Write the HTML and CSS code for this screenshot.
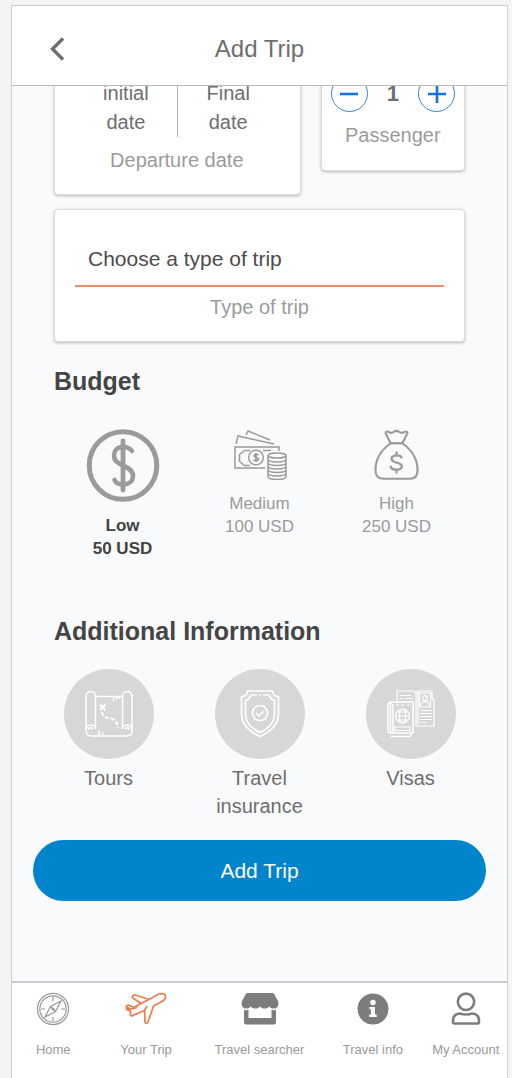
FILE: index.html
```html
<!DOCTYPE html>
<html lang="en">
<head>
<meta charset="utf-8">
<meta name="viewport" content="width=device-width, initial-scale=1">
<title>Add Trip</title>
<link rel="stylesheet" href="styles.css">
</head>
<body>
<div class="phone">
  <header class="topbar">
    <button class="back" type="button" aria-label="Back">
      <svg width="15" height="24" viewBox="0 0 15 24"><path d="M13 1.500 2.500 12l10.500 10.500" fill="none" stroke="currentColor" stroke-width="3.400"/></svg>
    </button>
    <h1 class="title">Add Trip</h1>
  </header>

  <main class="content">
    <section class="trip-row">
      <div class="card dates-card">
        <div class="dates">
          <button class="date" type="button">initial<br>date</button>
          <button class="date" type="button">Final<br>date</button>
        </div>
        <p class="caption">Departure date</p>
      </div>
      <div class="card passenger-card">
        <div class="stepper">
          <button class="step" type="button" aria-label="Remove passenger">
            <svg width="20" height="20" viewBox="0 0 20 20"><path d="M1 10h18" stroke="currentColor" stroke-width="2.600"/></svg>
          </button>
          <span class="count">1</span>
          <button class="step" type="button" aria-label="Add passenger">
            <svg width="20" height="20" viewBox="0 0 20 20"><path d="M1 10h18M10 1v18" stroke="currentColor" stroke-width="2.600"/></svg>
          </button>
        </div>
        <p class="caption">Passenger</p>
      </div>
    </section>

    <section class="card type-card">
      <select class="type-select" id="trip-type"><option>Choose a type of trip</option></select>
      <label class="caption" for="trip-type">Type of trip</label>
    </section>

    <h2 class="heading">Budget</h2>
    <div class="budget">
      <button class="tier selected" type="button">
        <svg width="74" height="73" viewBox="0 0 74 73" fill="none" stroke="currentColor" stroke-linecap="round">
          <circle cx="37" cy="36.500" r="33.800" stroke-width="5"/>
          <path d="M37 12v49" stroke-width="4.800"/>
          <path d="M46 22c-2.500-3.500-6-4-9-4-6 0-9 4-9 8.500 0 6 5 8 9 10s10 4.500 10 10.500c0 5-4 8.500-10 8.500-4 0-7-1.500-8.500-4.500" stroke-width="4.600"/>
        </svg>
        <span>Low<br>50 USD</span>
      </button>
      <button class="tier" type="button">
        <svg width="54" height="51" viewBox="0 0 54 51" fill="none" stroke="currentColor" stroke-width="1.500">
          <path d="M3 15 5 7l36 8M13 6l2-4 22 9"/>
          <path d="M32 39H2V18h44v4"/>
          <path d="M17 21.500h-5.500l-5 4v7l5 4H17M30 21.500h8"/>
          <circle cx="23" cy="28.500" r="7.300"/>
          <path d="M25.500 26c-1-1-4.500-1-4.500.8s4.500 1.500 4.500 3.400-4 1.700-5 .5M23 24v9" stroke-width="1.600"/>
          <ellipse cx="44" cy="26.500" rx="9" ry="2.600"/>
          <path d="M35 26.500v21c0 4 18 4 18 0v-21M35 30c0 4 18 4 18 0M35 33.500c0 4 18 4 18 0M35 37c0 4 18 4 18 0M35 40.500c0 4 18 4 18 0M35 44c0 4 18 4 18 0"/>
        </svg>
        <span>Medium<br>100 USD</span>
      </button>
      <button class="tier" type="button">
        <svg width="45" height="51" viewBox="0 0 46 52" fill="none" stroke="currentColor" stroke-width="2.200" stroke-linecap="round" stroke-linejoin="round">
          <path d="M17 14.500h12l5-10c.6-2-1.500-2.500-3-1.500-2 1.300-3.500 1.200-5 0-1.800-1.300-4.200-1.300-6 0-1.500 1.200-3 1.300-5 0-1.500-1-3.600-.5-3 1.500z"/>
          <path d="M17 14.500h12C38 21 44.500 31 44.500 42c0 6-3 8.800-8 8.800H9.500c-5 0-8-2.800-8-8.800 0-11 6.500-21 15.500-27.500z"/>
          <path d="M28 29c-1-3-10-3-10 1.500s10.500 3 10.500 7.500-10 4.500-11.500.5M23 24v3M23 41.500v3" stroke-width="2.400"/>
        </svg>
        <span>High<br>250 USD</span>
      </button>
    </div>

    <h2 class="heading">Additional Information</h2>
    <div class="extras">
      <button class="extra" type="button">
        <span class="disc">
          <svg width="48" height="48" viewBox="0 0 48 48" fill="none" stroke="currentColor" stroke-width="1.500">
            <path d="M1 40V6c0-6 9.500-6 9.500 0v32"/>
            <path d="M47 40V6c0-6-9.500-6-9.500 0v32"/>
            <path d="M10.500 39c0-5.500-9.500-5.500-9.500 1 0 4 2 6 5 6h36c3 0 5-2 5-6 0-6.500-9.500-6.500-9.500-1"/>
            <path d="M3.500 40c0-3 4-3 4-.5M44.500 40c0-3-4-3-4-.5M10.500 6.500h27M28.500 7v4.500M31.500 7v3M34 7v2M14 45.500v-5M17.500 45.500v-3"/>
            <path d="m15 14.500 5.500 5.500m0-5.500-5.500 5.500" stroke-width="2"/>
            <path d="M17 22c1 6 5 6 8 6 5 1 7 4 8 10" stroke-width="2" stroke-dasharray="4 2"/>
          </svg>
        </span>
        <span>Tours</span>
      </button>
      <button class="extra" type="button">
        <span class="disc">
          <svg width="40" height="48" viewBox="0 0 40 48" fill="none" stroke="currentColor" stroke-width="1.700" stroke-linejoin="round">
            <path d="M7.500 1h25c0 3 2 5.500 6 5.500V24c0 11-8 17.500-18.500 22.500C9.500 41.500 1.500 35 1.500 24V6.500c4 0 6-2.500 6-5.500z"/>
            <path d="M17 5h-6c-1 3-2.500 4.500-5.500 5.500V24c0 9 6 14 14.500 18.500C28.500 38 34.500 33 34.500 24V10.500C31.500 9.500 30 8 29 5h-6M19 5h2"/>
            <circle cx="20" cy="23" r="7.500"/>
            <path d="m16 23 3 3 5-5"/>
          </svg>
        </span>
        <span>Travel<br>insurance</span>
      </button>
      <button class="extra" type="button">
        <span class="disc">
          <svg width="48" height="48" viewBox="0 0 48 48" fill="none" stroke="currentColor" stroke-width="1.200">
            <path d="M10 11V1h17l2 2v31M29 3l2-2h14v7l2 2v26H29v-2M31 34V1M12.500 5.500h12M12.500 8.500h4M19 8.500h7"/>
            <path d="M32.500 3h11v14h-11z"/>
            <circle cx="38" cy="8" r="2.300"/>
            <path d="M34 16.500V15c0-4.500 8-4.500 8 0v1.500M33 20.500h12M33 23.500h12M33 26.500h12M33 29.500h12M33 32.500h7"/>
            <path d="M3.500 12h22.500v31H3.500z" stroke-width="1.600"/>
            <path d="m3.500 12-2.500 2v28l2.500 1M6 14v29M4 46.500h20" stroke-width="1.500"/>
            <path d="M24 43v3M9 15h3M14 15h3M20 15h3M8 37h15v3.500H8z"/>
            <circle cx="15.500" cy="26" r="7"/>
            <ellipse cx="15.500" cy="26" rx="3.200" ry="7"/>
            <path d="M8.500 26h14M10 22h11M10 30h11"/>
          </svg>
        </span>
        <span>Visas</span>
      </button>
    </div>

    <button class="submit" type="button">Add Trip</button>
  </main>

  <nav class="tabs">
    <a class="tab" href="#home">
      <svg width="34" height="34" viewBox="0 0 34 34" fill="none" stroke="#999" stroke-width="1.200">
        <circle cx="17" cy="17" r="15.600"/><circle cx="17" cy="17" r="13.200"/>
        <path d="M17 5v4M17 25v4M5 17h4M25 17h4M25 9l-5.500 10.500L9 25l5.500-10.500zM14.500 14.500l5 5"/><circle cx="17" cy="17" r="1"/>
      </svg>
      <span>Home</span>
    </a>
    <a class="tab" href="#trip" aria-current="page">
      <svg width="42" height="34" viewBox="0 0 42 34" fill="none" stroke="#ee7a4e" stroke-width="1.700" stroke-linejoin="round">
        <path d="M40.500 4.500c0-3-3.500-3.500-7-2.200L24 7.500 10.500 3c-2.500-.2-4 1.300-2.500 3l8 5.500-7 4L3.500 13c-2 .2-2.500 1.500-1.500 2.500L5.500 19v4c.5 1 1.500 1 2.500.4L19.500 18.500l.5 11.500c.4 1.800 2.500 1.500 3 .2l5.500-16.200L37 9.500c2-1 3.500-2.800 3.500-5z"/>
        <path d="m16 11.500 8-4M19.500 18.500 22 14M2 15.500 7 17l5-1.500M1.500 14v3.500l4 1.500"/>
      </svg>
      <span>Your Trip</span>
    </a>
    <a class="tab" href="#search">
      <svg width="38" height="34" viewBox="0 0 38 34" fill="#7d7d7d">
        <path d="M7 1h24c1 0 2 .5 2.500 1.500L37 9c1.500 4-1 7.500-4 7.500-2 0-3.500-.8-4.700-2.100-2.400 2.800-7 2.800-9.300 0-2.300 2.800-6.900 2.800-9.300 0C8.500 15.700 7 16.500 5 16.500c-3 0-5.500-3.500-4-7.500l3.500-6.500C5 1.500 6 1 7 1z"/>
        <path d="M3 18c1.500.4 3 .3 4.500-.2V26h23v-8.200c1.500.5 3 .6 4.500.2v12.500c0 1-1 2-2 2H5c-1 0-2-1-2-2z"/>
      </svg>
      <span>Travel searcher</span>
    </a>
    <a class="tab" href="#info">
      <svg width="32" height="34" viewBox="0 0 32 34">
        <circle cx="16" cy="17" r="15.500" fill="#7d7d7d"/><circle cx="16" cy="10.500" r="2.700" fill="#fff"/>
        <path d="M12.500 15H18v7.500h1.700V25h-7.400v-2.500H14v-5h-1.500z" fill="#fff"/>
      </svg>
      <span>Travel info</span>
    </a>
    <a class="tab" href="#account">
      <svg width="30" height="34" viewBox="0 0 30 34" fill="none" stroke="#7d7d7d" stroke-width="2.600" stroke-linejoin="round">
        <circle cx="15" cy="9.800" r="8.200"/>
        <path d="M9 21.500c3 1.300 9 1.300 12 0 4.500.3 7 3 7 7V30c0 1-.5 1.500-1.500 1.500h-23C2.500 31.500 2 31 2 30v-1.500c0-4 2.500-6.700 7-7z"/>
      </svg>
      <span>My Account</span>
    </a>
  </nav>
</div>
</body>
</html>
```
FILE: styles.css
```css
* { box-sizing: border-box; }

body {
  margin: 0;
  min-height: 100vh;
  display: flex;
  padding: 5px 4px 0 11px;
  background: #f4f4f4;
  font-family: "Liberation Sans", Arial, sans-serif;
  font-size: 20px;
  line-height: 28px;
  color: #6e6e6e;
}

button,
select {
  margin: 0;
  padding: 0;
  border: 0;
  background: none;
  font: inherit;
  color: inherit;
}

h1, h2, p { margin: 0; }

svg { display: block; flex: none; }

.phone {
  flex: 1;
  min-width: 0;
  display: flex;
  flex-direction: column;
  background: #f9fafc;
  border: 1px solid #cdced0;
  border-bottom: 0;
}

.topbar {
  display: grid;
  grid-template-columns: 40px 1fr 40px;
  align-items: center;
  height: 80px;
  padding: 7px 25px 0;
  background: #fff;
  border-bottom: 1px solid #b9bbbc;
}

.back {
  display: flex;
  justify-content: center;
  color: #6e6e6e;
}

.title {
  font-size: 24px;
  font-weight: 400;
  text-align: center;
}

.content {
  flex: 1;
  display: flex;
  flex-direction: column;
  padding: 0 42px 80px;
  overflow: hidden;
}

.card {
  background: #fff;
  border: 1px solid #dcdddf;
  border-radius: 4px;
  box-shadow: 0 1px 3px #b4b5b7;
}

.caption {
  display: block;
  color: #9b9b9b;
  text-align: center;
}

.trip-row {
  display: grid;
  grid-template-columns: 246fr 144fr;
  gap: 20px;
  align-items: start;
  margin-top: -32px;
}

.dates-card { padding: 24px 21px 20px 20px; }

.dates {
  display: grid;
  grid-template-columns: 1fr 1fr;
  margin-bottom: 9px;
}

.date { line-height: 29px; }

.date + .date { border-left: 1px solid #b5b5b5; }

.passenger-card { padding: 20px 9px 21px; }

.stepper {
  display: flex;
  justify-content: space-between;
  align-items: center;
  margin-bottom: 9px;
}

.step {
  display: flex;
  align-items: center;
  justify-content: center;
  width: 37px;
  height: 37px;
  border: 1px solid #3a87d0;
  border-radius: 50%;
  color: #1673dd;
}

.count {
  font-size: 22px;
  font-weight: 700;
}

.type-card {
  margin-top: 14px;
  padding: 20px;
}

.type-select {
  appearance: none;
  display: block;
  width: 100%;
  height: 57px;
  margin-bottom: 6px;
  padding: 2px 13px 0;
  border-bottom: 2px solid #ea8c6b;
  border-radius: 0;
  color: #4c4c4c;
  font-size: 21px;
}

.heading {
  margin-top: 25px;
  font-size: 25px;
  color: #454545;
}

.budget {
  display: grid;
  grid-template-columns: repeat(3, 1fr);
  align-items: start;
  margin: 34px 0 32px;
  font-size: 17px;
  line-height: 23px;
}

.tier {
  display: flex;
  flex-direction: column;
  align-items: center;
  gap: 12px;
  color: #9b9b9b;
}

.tier.selected { font-weight: 700; }

.tier.selected span { color: #424242; }

.extras {
  display: grid;
  grid-template-columns: repeat(3, 1fr);
  align-items: start;
  margin: 24px -21px 20px;
}

.extra {
  display: flex;
  flex-direction: column;
  align-items: center;
  gap: 5px;
}

.disc {
  display: flex;
  align-items: center;
  justify-content: center;
  width: 90px;
  height: 90px;
  border-radius: 50%;
  background: #d7d7d7;
  color: #fff;
}

.submit {
  height: 61px;
  margin: 0 -21px;
  border-radius: 31px;
  background: #0084cb;
  color: #fff;
  font-size: 21px;
}

.tabs {
  display: grid;
  grid-template-columns: 4fr 5fr 6fr 5fr 4fr;
  padding: 9px 0 19px;
  background: #fff;
  border-top: 2px solid #cbccd0;
  font-size: 13px;
  line-height: 20px;
}

.tab {
  display: flex;
  flex-direction: column;
  align-items: center;
  gap: 14px;
  color: #999;
  text-decoration: none;
  white-space: nowrap;
}
```
